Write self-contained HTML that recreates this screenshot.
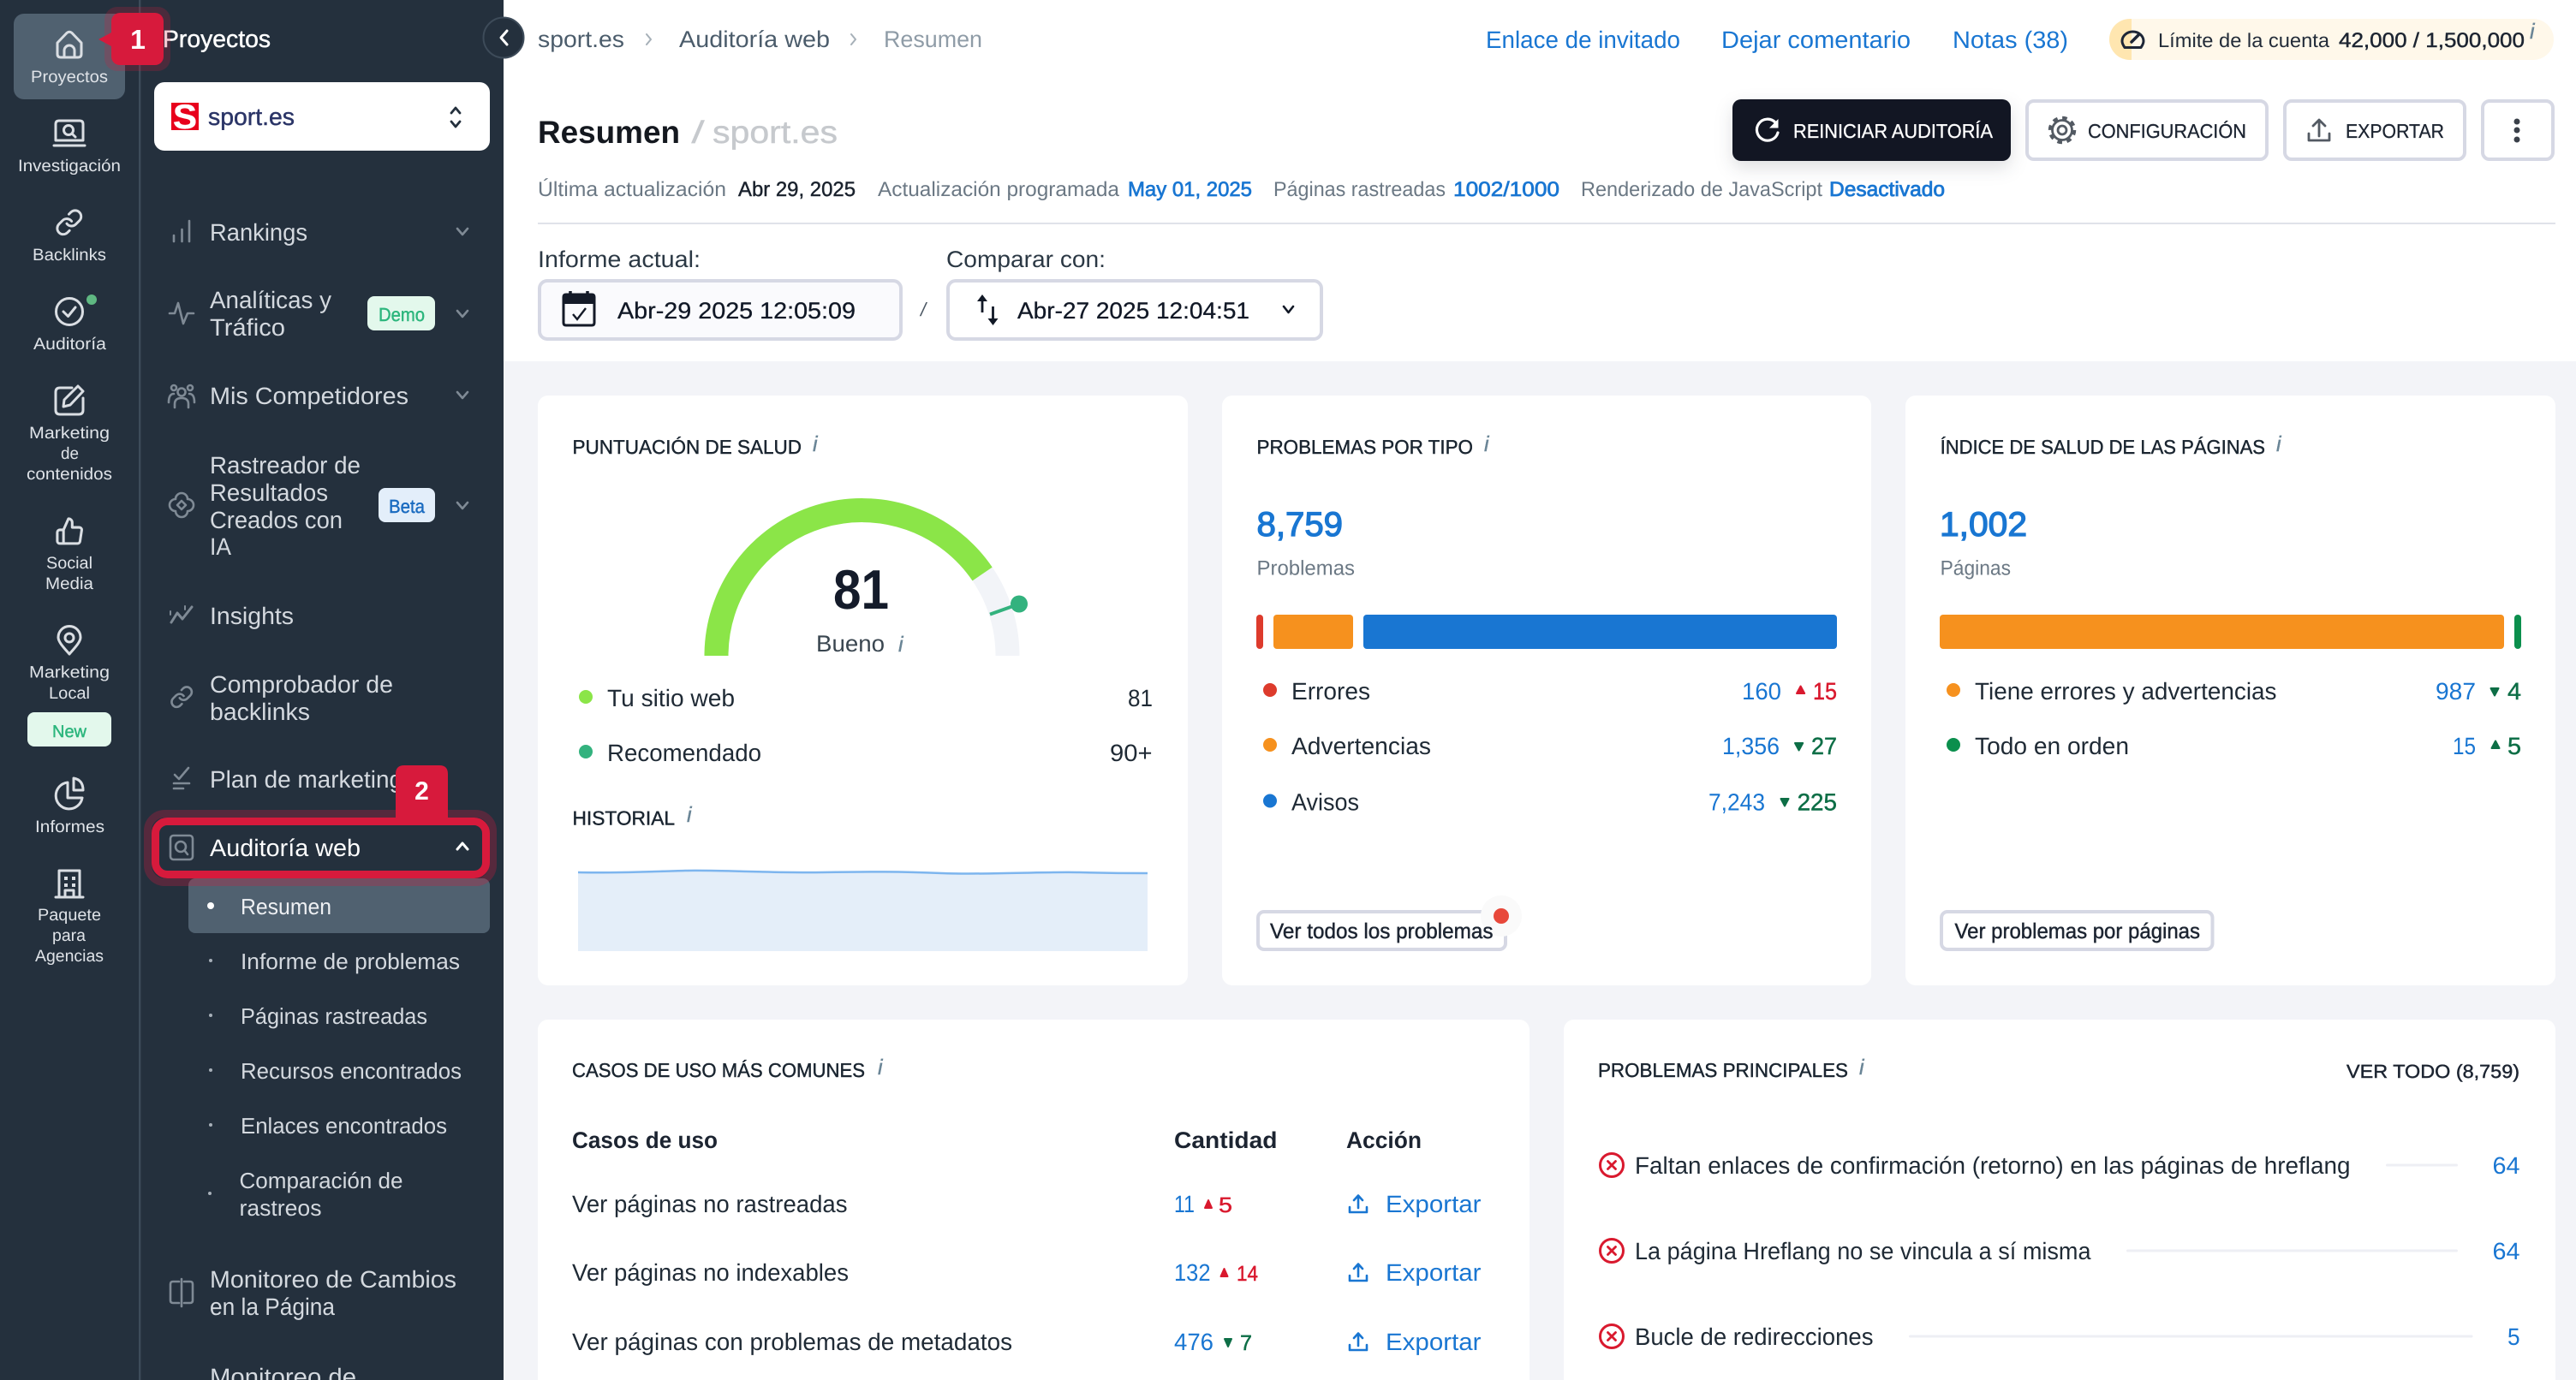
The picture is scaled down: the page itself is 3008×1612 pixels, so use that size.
<!DOCTYPE html>
<html lang="es">
<head>
<meta charset="utf-8">
<title>Resumen - sport.es</title>
<style>
html,body{margin:0;padding:0;width:3008px;height:1612px;overflow:hidden;background:#f3f4f8}
svg{display:block;position:absolute;left:0;top:0}
text{font-family:"Liberation Sans",sans-serif;fill:currentColor;text-rendering:geometricPrecision;white-space:pre}
.m{stroke:currentColor;stroke-width:.45px}
.b{font-weight:700}
.r{font-size:19.5px;color:#dfe3e8}
.n{font-size:28px;color:#d4d9df}
.s{font-size:26px;color:#d4d9df}
.t{font-size:28px;color:#1f2a35}
.h{font-size:23px;color:#1a2530}
.u{font-size:24px;color:#6b7884}
.l{font-size:28px;color:#1976d2}
.i{font-size:25px;font-style:italic;color:#6a8596;stroke:currentColor;stroke-width:.4px}
.ic{fill:none;stroke:#dadee3;stroke-width:3;stroke-linecap:round;stroke-linejoin:round}
.g{fill:none;stroke:#7f8a95;stroke-width:2.6;stroke-linecap:round;stroke-linejoin:round}
.d{fill:none;stroke:#535a63;stroke-width:2.8;stroke-linecap:round;stroke-linejoin:round}
.bx{fill:#fff;stroke:#d6d8e4;stroke-width:4}
</style>
</head>
<body>
<svg width="3008" height="1612" viewBox="0 0 3008 1612" xmlns="http://www.w3.org/2000/svg">
<!-- backgrounds -->
<rect width="3008" height="1612" fill="#f3f4f8"/>
<rect x="588" width="2420" height="422" fill="#fff"/>
<rect width="588" height="1612" fill="#24303d"/>
<rect x="162" width="2.4" height="1612" fill="#3d4b59"/>

<!-- rail -->
<rect x="16" y="16" width="130" height="100" rx="12" fill="#506170"/>
<g class="ic">
<path d="M67 50 78 38.500Q81 36 84 38.500L95 50V63Q95 67 91 67H71Q67 67 67 63Z"/><path d="M75 67V59A6 6 0 0 1 87 59V67"/>
<path d="M69 141H93Q97 141 97 145V164H65V145Q65 141 69 141Z"/><path d="M63 170H99"/><circle cx="80" cy="152" r="5.500"/><path d="M84 156 88 160"/>
<g transform="translate(64,243) scale(1.4)" stroke-width="2.100"><path d="M10 13a5 5 0 0 0 7.540.54l3-3a5 5 0 0 0-7.070-7.070l-1.720 1.710"/><path d="M14 11a5 5 0 0 0-7.540-.54l-3 3a5 5 0 0 0 7.070 7.070l1.710-1.710"/></g>
<circle cx="81" cy="364" r="15.500"/><path d="M74 364 79.500 369.500 88 359"/>
<path d="M84 453H70Q65 453 65 458V479Q65 484 70 484H92Q97 484 97 479V465"/><path d="M91 451 97 457 82 473 74 475 75 467Z"/>
<g transform="translate(64,603) scale(1.45)" stroke-width="2.100"><path d="M14 9V5a3 3 0 0 0-3-3l-4 9v11h11.280a2 2 0 0 0 2-1.700l1.380-9a2 2 0 0 0-2-2.300zM7 22H4a2 2 0 0 1-2-2v-7a2 2 0 0 1 2-2h3"/></g>
<path d="M81 764C75 757 68 750 68 744.500A13 13 0 0 1 94 744.500C94 750 87 757 81 764Z"/><circle cx="81" cy="745" r="5"/>
<path d="M79 914A15.500 15.500 0 1 0 96 932H79Z"/><path d="M86 909Q97 911 97 923H86Z"/>
<path d="M69 1048V1017H93V1048M65 1048H97M76 1048V1040H86V1048"/>
</g>
<g fill="#dadee3"><rect x="75" y="1024" width="4" height="4"/><rect x="84" y="1024" width="4" height="4"/><rect x="75" y="1032" width="4" height="4"/><rect x="84" y="1032" width="4" height="4"/></g>
<circle cx="107" cy="350" r="6" fill="#5fb882"/>
<text class="r" x="36" y="96" textLength="90" lengthAdjust="spacingAndGlyphs">Proyectos</text>
<text class="r" x="21" y="200" textLength="120" lengthAdjust="spacingAndGlyphs">Investigación</text>
<text class="r" x="38" y="304" textLength="86" lengthAdjust="spacingAndGlyphs">Backlinks</text>
<text class="r" x="39" y="408" textLength="85" lengthAdjust="spacingAndGlyphs">Auditoría</text>
<text class="r" x="34" y="512" textLength="94" lengthAdjust="spacingAndGlyphs">Marketing</text>
<text class="r" x="71" y="536" textLength="21" lengthAdjust="spacingAndGlyphs">de</text>
<text class="r" x="31" y="560" textLength="100" lengthAdjust="spacingAndGlyphs">contenidos</text>
<text class="r" x="54" y="664" textLength="54" lengthAdjust="spacingAndGlyphs">Social</text>
<text class="r" x="53" y="688" textLength="56" lengthAdjust="spacingAndGlyphs">Media</text>
<text class="r" x="34" y="791.500" textLength="94" lengthAdjust="spacingAndGlyphs">Marketing</text>
<text class="r" x="57" y="816" textLength="48" lengthAdjust="spacingAndGlyphs">Local</text>
<rect x="32" y="832" width="98" height="40" rx="8" fill="#e3f8ec"/>
<text x="61" y="861" font-size="20" class="m" style="color:#2cb67d" textLength="40" lengthAdjust="spacingAndGlyphs">New</text>
<text class="r" x="41" y="972" textLength="81" lengthAdjust="spacingAndGlyphs">Informes</text>
<text class="r" x="44" y="1075" textLength="74" lengthAdjust="spacingAndGlyphs">Paquete</text>
<text class="r" x="61" y="1099" textLength="39" lengthAdjust="spacingAndGlyphs">para</text>
<text class="r" x="41" y="1123" textLength="80" lengthAdjust="spacingAndGlyphs">Agencias</text>

<!-- panel -->
<text x="190" y="55" font-size="28" class="m" style="color:#fff" textLength="126" lengthAdjust="spacingAndGlyphs">Proyectos</text>
<rect x="180" y="96" width="392" height="80" rx="12" fill="#fff"/>
<rect x="200" y="120" width="32" height="32" fill="#e8001c"/>
<text x="202" y="150" font-size="40" class="b m" style="color:#fff" textLength="28" lengthAdjust="spacingAndGlyphs">S</text>
<text x="243" y="146" font-size="28" class="m" style="color:#2b3567" textLength="101" lengthAdjust="spacingAndGlyphs">sport.es</text>
<path d="M527 132 532 126 537 132M527 142 532 148 537 142" fill="none" stroke="#24303d" stroke-width="2.800" stroke-linecap="round" stroke-linejoin="round"/>

<!-- panel icons -->
<g class="g">
<path d="M203 282V275M212.500 282V268M221 282V258"/>
<path d="M198 366H204L208 354 214 378 219 366H226"/>
<circle cx="212" cy="458" r="4.500"/><circle cx="203" cy="453" r="3"/><circle cx="222" cy="453" r="3"/><path d="M204 476V472Q204 465 212 465T220 472V476M197 470Q197 460 203 460M227 470Q227 460 221 460"/>
<path d="M205 583a7 7 0 0 1 14 0a7 7 0 0 1 0 14a7 7 0 0 1-14 0a7 7 0 0 1 0-14z"/><path d="M212 585 217 590 212 595 207 590Z"/>
<path d="M200 727 207 716 213 723 224 709" stroke-width="3"/><path d="M199 714V718M216 708V712" stroke-width="2"/>
<g transform="translate(198,800) scale(1.18)" stroke-width="2.200"><path d="M10 13a5 5 0 0 0 7.540.54l3-3a5 5 0 0 0-7.070-7.070l-1.720 1.710"/><path d="M14 11a5 5 0 0 0-7.540-.54l-3 3a5 5 0 0 0 7.070 7.070l1.710-1.710"/></g>
<path d="M204 905 209 910 220 897M203 915H221M203 921H214"/>
<path d="M209 1497H202Q199 1497 199 1500V1519Q199 1522 202 1522H209M212 1494V1526M215 1497H222Q225 1497 225 1500V1519Q225 1522 222 1522H215"/>
<path d="M534 267 540 274 546 267M534 363 540 370 546 363M534 458 540 465 546 458M534 587 540 594 546 587"/>
</g>
<text class="n" x="245" y="281" textLength="114" lengthAdjust="spacingAndGlyphs">Rankings</text>
<text class="n" x="245" y="360" textLength="142" lengthAdjust="spacingAndGlyphs">Analíticas y</text>
<text class="n" x="245" y="392" textLength="88" lengthAdjust="spacingAndGlyphs">Tráfico</text>
<rect x="429" y="346" width="79" height="40" rx="8" fill="#e3f8ec"/>
<text x="442" y="375" font-size="22" class="m" style="color:#2cb67d" textLength="54" lengthAdjust="spacingAndGlyphs">Demo</text>
<text class="n" x="245" y="472" textLength="232" lengthAdjust="spacingAndGlyphs">Mis Competidores</text>
<text class="n" x="245" y="553" textLength="176" lengthAdjust="spacingAndGlyphs">Rastreador de</text>
<text class="n" x="245" y="585" textLength="138" lengthAdjust="spacingAndGlyphs">Resultados</text>
<text class="n" x="245" y="617" textLength="155" lengthAdjust="spacingAndGlyphs">Creados con</text>
<text class="n" x="245" y="648" textLength="25" lengthAdjust="spacingAndGlyphs">IA</text>
<rect x="442" y="570" width="66" height="40" rx="8" fill="#e3eefa"/>
<text x="454" y="599" font-size="22" class="m" style="color:#1a6bc0" textLength="42" lengthAdjust="spacingAndGlyphs">Beta</text>
<text class="n" x="245" y="729" textLength="98" lengthAdjust="spacingAndGlyphs">Insights</text>
<text class="n" x="245" y="809" textLength="214" lengthAdjust="spacingAndGlyphs">Comprobador de</text>
<text class="n" x="245" y="841" textLength="117" lengthAdjust="spacingAndGlyphs">backlinks</text>
<text class="n" x="245" y="920" textLength="225" lengthAdjust="spacingAndGlyphs">Plan de marketing</text>

<!-- sub item -->
<rect x="220" y="1026" width="352" height="64" rx="8" fill="#506170"/>
<circle cx="246" cy="1058" r="4" fill="#fff"/>
<text class="s" x="281" y="1068" style="color:#eef0f3" textLength="106" lengthAdjust="spacingAndGlyphs">Resumen</text>
<g fill="#a7b0b9"><circle cx="246" cy="1122" r="2"/><circle cx="246" cy="1186" r="2"/><circle cx="246" cy="1250" r="2"/><circle cx="246" cy="1314" r="2"/><circle cx="245" cy="1394" r="2"/></g>
<text class="s" x="281" y="1132" textLength="256" lengthAdjust="spacingAndGlyphs">Informe de problemas</text>
<text class="s" x="281" y="1196" textLength="218" lengthAdjust="spacingAndGlyphs">Páginas rastreadas</text>
<text class="s" x="281" y="1260" textLength="258" lengthAdjust="spacingAndGlyphs">Recursos encontrados</text>
<text class="s" x="281" y="1324" textLength="241" lengthAdjust="spacingAndGlyphs">Enlaces encontrados</text>
<text class="s" x="279.500" y="1388" textLength="191" lengthAdjust="spacingAndGlyphs">Comparación de</text>
<text class="s" x="279.500" y="1420" textLength="96" lengthAdjust="spacingAndGlyphs">rastreos</text>
<text class="n" x="245" y="1504" textLength="288" lengthAdjust="spacingAndGlyphs">Monitoreo de Cambios</text>
<text class="n" x="245" y="1536" textLength="146" lengthAdjust="spacingAndGlyphs">en la Página</text>
<text class="n" x="245" y="1618" textLength="171" lengthAdjust="spacingAndGlyphs">Monitoreo de</text>

<!-- highlight -->
<rect x="172.500" y="950.500" width="403" height="80" rx="20" fill="none" stroke="#d71a3c" stroke-opacity=".28" stroke-width="9"/>
<rect x="181.500" y="959.500" width="386" height="62" rx="14" fill="#24303d" stroke="#d71a3c" stroke-width="9"/>
<g class="g"><rect x="199" y="976" width="26" height="28" rx="3.500"/><circle cx="211" cy="989" r="6"/><path d="M215.500 993.500 219 998"/></g>
<text x="245" y="1000" font-size="28" style="color:#fff" textLength="176" lengthAdjust="spacingAndGlyphs">Auditoría web</text>
<path d="M534 992 540 985 546 992" fill="none" stroke="#fff" stroke-width="3" stroke-linecap="round" stroke-linejoin="round"/>
<path d="M462 958V904Q462 894 472 894H513Q523 894 523 904V958Z" fill="#d71a3c"/>
<text x="492.500" y="934" font-size="30" class="b" style="color:#fff" text-anchor="middle">2</text>

<rect x="122" y="8" width="77" height="75" rx="15" fill="#d71a3c" fill-opacity=".22"/>
<path d="M130 38 115 46 130 54Z" fill="#d71a3c"/>
<rect x="130" y="15" width="61" height="61" rx="10" fill="#d71a3c"/>
<text x="161" y="57" font-size="32" class="b" style="color:#fff" text-anchor="middle">1</text>

<circle cx="588" cy="44" r="23.500" fill="#24303d" stroke="#3d4b59" stroke-width="2"/>
<path d="M592 36 585 44 592 52" fill="none" stroke="#fff" stroke-width="3" stroke-linecap="round" stroke-linejoin="round"/>

<!-- breadcrumbs -->
<g font-size="27">
<text x="628" y="55" style="color:#4b5c6b" textLength="101" lengthAdjust="spacingAndGlyphs">sport.es</text>
<text x="793" y="55" style="color:#4b5c6b" textLength="176" lengthAdjust="spacingAndGlyphs">Auditoría web</text>
<text x="1032" y="55" style="color:#8f9ca7" textLength="115" lengthAdjust="spacingAndGlyphs">Resumen</text>
</g>
<path d="M755 40 760 46 755 52M994 40 999 46 994 52" fill="none" stroke="#a6b0b8" stroke-width="2" stroke-linecap="round" stroke-linejoin="round"/>
<text class="l" x="1735" y="56" textLength="227" lengthAdjust="spacingAndGlyphs">Enlace de invitado</text>
<text class="l" x="2010" y="56" textLength="221" lengthAdjust="spacingAndGlyphs">Dejar comentario</text>
<text class="l" x="2280" y="56" textLength="135" lengthAdjust="spacingAndGlyphs">Notas (38)</text>
<rect x="2463" y="22" width="519" height="48" rx="24" fill="#fff8ea"/>
<path d="M2489 22H2487A24 24 0 0 0 2487 70H2489Z" fill="#ffe6b0"/>
<path d="M2481 55.500Q2478 51 2478 48A12.500 11 0 0 1 2503 48Q2503 51 2500 55.500Z" fill="none" stroke="#1d2636" stroke-width="3" stroke-linejoin="round"/>
<path d="M2489 49 2497 41" stroke="#1d2636" stroke-width="3.500" stroke-linecap="round"/>
<text x="2520" y="55" font-size="23" style="color:#222b38" textLength="200" lengthAdjust="spacingAndGlyphs">Límite de la cuenta</text>
<text x="2731" y="55" font-size="24" class="m" style="color:#1c2431" textLength="217" lengthAdjust="spacingAndGlyphs">42,000 / 1,500,000</text>
<text class="i" x="2954" y="45">i</text>

<!-- title -->
<text x="628" y="167" font-size="37" class="b" style="color:#14181f" textLength="166" lengthAdjust="spacingAndGlyphs">Resumen</text>
<text x="807" y="167" font-size="37" style="color:#c6c9cd" textLength="16" lengthAdjust="spacingAndGlyphs">/</text>
<text x="832" y="167" font-size="37" class="m" style="color:#c6c9cd" textLength="146" lengthAdjust="spacingAndGlyphs">sport.es</text>
<rect x="2023" y="116" width="325" height="72" rx="10" fill="#121623" style="filter:drop-shadow(0 8px 10px rgba(20,25,40,.14))"/>
<path d="M2073 143A12.500 12.500 0 1 0 2076 155" fill="none" stroke="#fff" stroke-width="3.200" stroke-linecap="round"/>
<path d="M2076.500 139V149.500H2066Z" fill="#fff"/>
<text x="2094" y="161" font-size="23" class="m" style="color:#fff;stroke-width:.3px" textLength="233" lengthAdjust="spacingAndGlyphs">REINICIAR AUDITORÍA</text>
<rect class="bx" x="2367" y="118" width="280" height="68" rx="8"/>
<circle cx="2408" cy="152" r="14" fill="none" stroke="#535a63" stroke-width="4.500" stroke-dasharray="5.500 5.500"/>
<circle cx="2408" cy="152" r="11.500" fill="#fff" stroke="#535a63" stroke-width="2.800"/>
<circle cx="2408" cy="152" r="5" fill="none" stroke="#535a63" stroke-width="2.800"/>
<text x="2438" y="161" font-size="23" class="m" style="color:#1c2431;stroke-width:.3px" textLength="185" lengthAdjust="spacingAndGlyphs">CONFIGURACIÓN</text>
<rect class="bx" x="2668" y="118" width="210" height="68" rx="8"/>
<path class="d" d="M2708 159V141M2701 147 2708 140 2715 147M2696 156V164H2720V156"/>
<text x="2739" y="161" font-size="23" class="m" style="color:#1c2431;stroke-width:.3px" textLength="115" lengthAdjust="spacingAndGlyphs">EXPORTAR</text>
<rect class="bx" x="2899" y="118" width="82" height="68" rx="8"/>
<g fill="#3a4049"><circle cx="2939" cy="142" r="3.500"/><circle cx="2939" cy="152" r="3.500"/><circle cx="2939" cy="163" r="3.500"/></g>

<!-- info line -->
<text class="u" x="628" y="229" textLength="220" lengthAdjust="spacingAndGlyphs">Última actualización</text>
<text x="862" y="229" font-size="24" class="m" style="color:#1a222d" textLength="137" lengthAdjust="spacingAndGlyphs">Abr 29, 2025</text>
<text class="u" x="1025" y="229" textLength="282" lengthAdjust="spacingAndGlyphs">Actualización programada</text>
<text x="1317" y="229" font-size="24" class="m" style="color:#1976d2;stroke-width:.7px" textLength="145" lengthAdjust="spacingAndGlyphs">May 01, 2025</text>
<text class="u" x="1487" y="229" textLength="201" lengthAdjust="spacingAndGlyphs">Páginas rastreadas</text>
<text x="1697" y="229" font-size="24" class="m" style="color:#1976d2;stroke-width:.7px" textLength="124" lengthAdjust="spacingAndGlyphs">1002/1000</text>
<text class="u" x="1846" y="229" textLength="282" lengthAdjust="spacingAndGlyphs">Renderizado de JavaScript</text>
<text x="2136" y="229" font-size="24" class="m" style="color:#1976d2;stroke-width:.8px" textLength="135" lengthAdjust="spacingAndGlyphs">Desactivado</text>
<rect x="628" y="260" width="2356" height="2" fill="#e0e2ea"/>

<!-- report selectors -->
<text x="628" y="312" font-size="27" style="color:#2b3844" textLength="190" lengthAdjust="spacingAndGlyphs">Informe actual:</text>
<text x="1105" y="312" font-size="27" style="color:#2b3844" textLength="186" lengthAdjust="spacingAndGlyphs">Comparar con:</text>
<rect x="630" y="328" width="422" height="68" rx="9" fill="#fafafd" stroke="#d6d8e4" stroke-width="4"/>
<path d="M661 344H691Q694 344 694 347V377Q694 380 691 380H661Q658 380 658 377V347Q658 344 661 344Z" fill="#fafafd" stroke="#141a28" stroke-width="3"/>
<rect x="658" y="344" width="36" height="11" fill="#141a28"/>
<path d="M666 340V346M686 340V346" stroke="#141a28" stroke-width="3.500"/>
<path d="M669 367 674 373 684 360" fill="none" stroke="#141a28" stroke-width="2.400"/>
<text x="721" y="372" font-size="27" class="m" style="color:#111826;stroke-width:.3px" textLength="278" lengthAdjust="spacingAndGlyphs">Abr-29 2025 12:05:09</text>
<text x="1075" y="369" font-size="22" font-style="italic" style="color:#4b5763">/</text>
<rect class="bx" x="1107" y="328" width="436" height="68" rx="9"/>
<path d="M1147 365V347M1159.500 358V376" stroke="#111826" stroke-width="2.800"/>
<path d="M1147 344 1141 352H1153ZM1159.500 380 1153.500 372H1165.500Z" fill="#111826"/>
<text x="1188" y="372" font-size="27" class="m" style="color:#111826;stroke-width:.3px" textLength="271" lengthAdjust="spacingAndGlyphs">Abr-27 2025 12:04:51</text>
<path d="M1499 358 1504.500 365 1510 358" fill="none" stroke="#111826" stroke-width="2.600" stroke-linecap="round" stroke-linejoin="round"/>

<!-- card 1 -->
<rect x="628" y="462" width="759" height="689" rx="12" fill="#fff"/>
<text class="h m" x="668.500" y="530" textLength="267.500" lengthAdjust="spacingAndGlyphs">PUNTUACIÓN DE SALUD</text>
<text class="i" x="949" y="527">i</text>
<path d="M836.500 766A170 170 0 0 1 1176.500 766" fill="none" stroke="#f2f4f8" stroke-width="28"/>
<path d="M836.500 766A170 170 0 0 1 1147.100 670.500" fill="none" stroke="#8be548" stroke-width="28"/>
<path d="M1156 717.600 1190 705.500" stroke="#33b27e" stroke-width="4"/>
<circle cx="1190" cy="705.500" r="10" fill="#33b27e"/>
<text x="973" y="711" font-size="65" class="b" style="color:#141b2a" textLength="65" lengthAdjust="spacingAndGlyphs">81</text>
<text x="953" y="761" font-size="27" style="color:#3a4650" textLength="80" lengthAdjust="spacingAndGlyphs">Bueno</text>
<text class="i" x="1049" y="761">i</text>
<circle cx="684" cy="814" r="8" fill="#8be548"/>
<text class="t" x="709" y="825" textLength="149" lengthAdjust="spacingAndGlyphs">Tu sitio web</text>
<text class="t" x="1317" y="825" textLength="29" lengthAdjust="spacingAndGlyphs">81</text>
<circle cx="684" cy="878" r="8" fill="#33b27e"/>
<text class="t" x="709" y="889" textLength="180" lengthAdjust="spacingAndGlyphs">Recomendado</text>
<text class="t" x="1296" y="889" textLength="49.500" lengthAdjust="spacingAndGlyphs">90+</text>
<text class="h m" x="668.500" y="963.500" textLength="119.500" lengthAdjust="spacingAndGlyphs">HISTORIAL</text>
<text class="i" x="802" y="960">i</text>
<path d="M675 1019C720 1020 760 1018 800 1017S900 1020 960 1019 1050 1018 1100 1020 1220 1018 1260 1019 1320 1020 1340 1020V1111H675Z" fill="#e4eef9"/>
<path d="M675 1019C720 1020 760 1018 800 1017S900 1020 960 1019 1050 1018 1100 1020 1220 1018 1260 1019 1320 1020 1340 1020" fill="none" stroke="#7db5ee" stroke-width="2.500"/>

<!-- card 2 -->
<rect x="1427" y="462" width="758" height="689" rx="12" fill="#fff"/>
<text class="h m" x="1467.500" y="530" textLength="252.500" lengthAdjust="spacingAndGlyphs">PROBLEMAS POR TIPO</text>
<text class="i" x="1733" y="527">i</text>
<text x="1467.500" y="626" font-size="40" class="m" style="color:#1976d2;stroke-width:1.300px" textLength="100.500" lengthAdjust="spacingAndGlyphs">8,759</text>
<text class="u" x="1467.500" y="671.500" textLength="114.500" lengthAdjust="spacingAndGlyphs">Problemas</text>
<rect x="1467" y="718" width="8" height="40" rx="4" fill="#dd3b2c"/>
<rect x="1487" y="718" width="93" height="40" rx="4" fill="#f6911e"/>
<rect x="1592" y="718" width="553" height="40" rx="4" fill="#1976d2"/>
<circle cx="1483" cy="806" r="8" fill="#dd3b2c"/>
<text class="t" x="1508" y="817" textLength="92" lengthAdjust="spacingAndGlyphs">Errores</text>
<text class="l" x="2034" y="817" textLength="46" lengthAdjust="spacingAndGlyphs">160</text>
<path d="M2102.600 801.500 2098 810H2107.200Z" fill="#d9192e" stroke="#d9192e" stroke-width="2" stroke-linejoin="round"/>
<text x="2117" y="817" font-size="28" class="m" style="color:#d9192e" textLength="28" lengthAdjust="spacingAndGlyphs">15</text>
<circle cx="1483" cy="870" r="8" fill="#f6911e"/>
<text class="t" x="1508" y="881" textLength="163" lengthAdjust="spacingAndGlyphs">Advertencias</text>
<text class="l" x="2011" y="881" textLength="67" lengthAdjust="spacingAndGlyphs">1,356</text>
<path d="M2100.600 876.500 2096 868H2105.200Z" fill="#0d6e46" stroke="#0d6e46" stroke-width="2" stroke-linejoin="round"/>
<text x="2115" y="881" font-size="28" class="m" style="color:#0d6e46" textLength="30" lengthAdjust="spacingAndGlyphs">27</text>
<circle cx="1483" cy="935.500" r="8" fill="#1976d2"/>
<text class="t" x="1508" y="946.500" textLength="79" lengthAdjust="spacingAndGlyphs">Avisos</text>
<text class="l" x="1995" y="946.500" textLength="66" lengthAdjust="spacingAndGlyphs">7,243</text>
<path d="M2084 941.500 2079.500 933H2088.500Z" fill="#0d6e46" stroke="#0d6e46" stroke-width="2" stroke-linejoin="round"/>
<text x="2098.600" y="946.500" font-size="28" class="m" style="color:#0d6e46" textLength="46.400" lengthAdjust="spacingAndGlyphs">225</text>
<rect class="bx" x="1469" y="1065" width="289" height="44" rx="7"/>
<circle cx="1753" cy="1070" r="24" fill="#fafafa"/>
<text x="1483" y="1096" font-size="25" class="m" style="color:#1c2431" textLength="260.500" lengthAdjust="spacingAndGlyphs">Ver todos los problemas</text>
<circle cx="1753" cy="1070" r="9" fill="#e8483a"/>

<!-- card 3 -->
<rect x="2225" y="462" width="759" height="689" rx="12" fill="#fff"/>
<text class="h m" x="2265.600" y="530" textLength="379.400" lengthAdjust="spacingAndGlyphs">ÍNDICE DE SALUD DE LAS PÁGINAS</text>
<text class="i" x="2658" y="527">i</text>
<text x="2265" y="626" font-size="40" class="m" style="color:#1976d2;stroke-width:1.300px" textLength="102" lengthAdjust="spacingAndGlyphs">1,002</text>
<text class="u" x="2265.600" y="671.500" textLength="82.400" lengthAdjust="spacingAndGlyphs">Páginas</text>
<rect x="2265" y="718" width="659" height="40" rx="4" fill="#f6911e"/>
<rect x="2936" y="718" width="8" height="40" rx="4" fill="#0b8f4d"/>
<circle cx="2281" cy="806" r="8" fill="#f6911e"/>
<text class="t" x="2306" y="817" textLength="352.500" lengthAdjust="spacingAndGlyphs">Tiene errores y advertencias</text>
<text class="l" x="2844" y="817" textLength="47" lengthAdjust="spacingAndGlyphs">987</text>
<path d="M2913 812.500 2908.500 804H2917.500Z" fill="#0d6e46" stroke="#0d6e46" stroke-width="2" stroke-linejoin="round"/>
<text x="2928" y="817" font-size="28" class="m" style="color:#0d6e46" textLength="16" lengthAdjust="spacingAndGlyphs">4</text>
<circle cx="2281" cy="870" r="8" fill="#0b8f4d"/>
<text class="t" x="2306" y="881" textLength="180" lengthAdjust="spacingAndGlyphs">Todo en orden</text>
<text class="l" x="2864" y="881" textLength="27" lengthAdjust="spacingAndGlyphs">15</text>
<path d="M2914 865.500 2909.500 874H2918.500Z" fill="#0d6e46" stroke="#0d6e46" stroke-width="2" stroke-linejoin="round"/>
<text x="2928" y="881" font-size="28" class="m" style="color:#0d6e46" textLength="16" lengthAdjust="spacingAndGlyphs">5</text>
<rect class="bx" x="2267" y="1065" width="316.500" height="44" rx="7"/>
<text x="2282.500" y="1096" font-size="25" class="m" style="color:#1c2431" textLength="286.500" lengthAdjust="spacingAndGlyphs">Ver problemas por páginas</text>

<!-- card 4 -->
<rect x="628" y="1191" width="1158" height="460" rx="12" fill="#fff"/>
<text class="h m" x="668" y="1258" textLength="342" lengthAdjust="spacingAndGlyphs">CASOS DE USO MÁS COMUNES</text>
<text class="i" x="1025" y="1255">i</text>
<g font-size="27" class="b" style="color:#1c2431">
<text x="668" y="1341" textLength="170" lengthAdjust="spacingAndGlyphs">Casos de uso</text>
<text x="1371" y="1341" textLength="120.500" lengthAdjust="spacingAndGlyphs">Cantidad</text>
<text x="1572" y="1341" textLength="88" lengthAdjust="spacingAndGlyphs">Acción</text>
</g>
<text class="t" x="668" y="1416" textLength="321.500" lengthAdjust="spacingAndGlyphs">Ver páginas no rastreadas</text>
<text class="t" x="668" y="1496" textLength="323" lengthAdjust="spacingAndGlyphs">Ver páginas no indexables</text>
<text class="t" x="668" y="1577" textLength="514" lengthAdjust="spacingAndGlyphs">Ver páginas con problemas de metadatos</text>
<text class="l" x="1371" y="1416" textLength="24" lengthAdjust="spacingAndGlyphs">11</text>
<path d="M1411 1402 1407 1411H1415Z" fill="#d9192e" stroke="#d9192e" stroke-width="2" stroke-linejoin="round"/>
<text x="1423" y="1416" font-size="25" class="m" style="color:#d9192e" textLength="16" lengthAdjust="spacingAndGlyphs">5</text>
<text class="l" x="1371" y="1496" textLength="42.500" lengthAdjust="spacingAndGlyphs">132</text>
<path d="M1429.500 1482 1425.500 1491H1433.500Z" fill="#d9192e" stroke="#d9192e" stroke-width="2" stroke-linejoin="round"/>
<text x="1444" y="1496" font-size="25" class="m" style="color:#d9192e" textLength="25" lengthAdjust="spacingAndGlyphs">14</text>
<text class="l" x="1371" y="1577" textLength="46" lengthAdjust="spacingAndGlyphs">476</text>
<path d="M1434 1573 1430 1564H1438Z" fill="#0d6e46" stroke="#0d6e46" stroke-width="2" stroke-linejoin="round"/>
<text x="1448" y="1577" font-size="25" class="m" style="color:#0d6e46" textLength="14" lengthAdjust="spacingAndGlyphs">7</text>
<g fill="none" stroke="#1976d2" stroke-width="2.600" stroke-linecap="round" stroke-linejoin="round">
<path d="M1586 1411V1397M1581 1402 1586 1396.500 1591 1402M1576 1410V1416H1596V1410"/>
<path d="M1586 1491V1477M1581 1482 1586 1476.500 1591 1482M1576 1490V1496H1596V1490"/>
<path d="M1586 1572V1558M1581 1563 1586 1557.500 1591 1563M1576 1571V1577H1596V1571"/>
</g>
<text class="l" x="1618" y="1416" textLength="111.500" lengthAdjust="spacingAndGlyphs">Exportar</text>
<text class="l" x="1618" y="1496" textLength="111.500" lengthAdjust="spacingAndGlyphs">Exportar</text>
<text class="l" x="1618" y="1577" textLength="111.500" lengthAdjust="spacingAndGlyphs">Exportar</text>

<!-- card 5 -->
<rect x="1826" y="1191" width="1158" height="460" rx="12" fill="#fff"/>
<text class="h m" x="1866" y="1258" textLength="292" lengthAdjust="spacingAndGlyphs">PROBLEMAS PRINCIPALES</text>
<text class="i" x="2171" y="1255">i</text>
<text x="2740" y="1259" font-size="22" class="m" style="color:#1c2431" textLength="202" lengthAdjust="spacingAndGlyphs">VER TODO (8,759)</text>
<g fill="none" stroke="#d9192e" stroke-linecap="round">
<circle cx="1882" cy="1361" r="13.500" stroke-width="3"/><path d="M1877.500 1356.500 1886.500 1365.500M1886.500 1356.500 1877.500 1365.500" stroke-width="2.800"/>
<circle cx="1882" cy="1461" r="13.500" stroke-width="3"/><path d="M1877.500 1456.500 1886.500 1465.500M1886.500 1456.500 1877.500 1465.500" stroke-width="2.800"/>
<circle cx="1882" cy="1561" r="13.500" stroke-width="3"/><path d="M1877.500 1556.500 1886.500 1565.500M1886.500 1556.500 1877.500 1565.500" stroke-width="2.800"/>
</g>
<text class="t" x="1909" y="1371" textLength="835.500" lengthAdjust="spacingAndGlyphs">Faltan enlaces de confirmación (retorno) en las páginas de hreflang</text>
<rect x="2786" y="1359.500" width="84" height="3" rx="1.500" fill="#eeeff4"/>
<text class="l" x="2910.500" y="1371" textLength="32" lengthAdjust="spacingAndGlyphs">64</text>
<text class="t" x="1909" y="1471" textLength="532.500" lengthAdjust="spacingAndGlyphs">La página Hreflang no se vincula a sí misma</text>
<rect x="2483" y="1459.500" width="387" height="3" rx="1.500" fill="#eeeff4"/>
<text class="l" x="2910.500" y="1471" textLength="32" lengthAdjust="spacingAndGlyphs">64</text>
<text class="t" x="1909" y="1571" textLength="278.500" lengthAdjust="spacingAndGlyphs">Bucle de redirecciones</text>
<rect x="2229" y="1559.500" width="658.500" height="3" rx="1.500" fill="#eeeff4"/>
<text class="l" x="2928" y="1571" textLength="14.600" lengthAdjust="spacingAndGlyphs">5</text>
</svg>
</body>
</html>
